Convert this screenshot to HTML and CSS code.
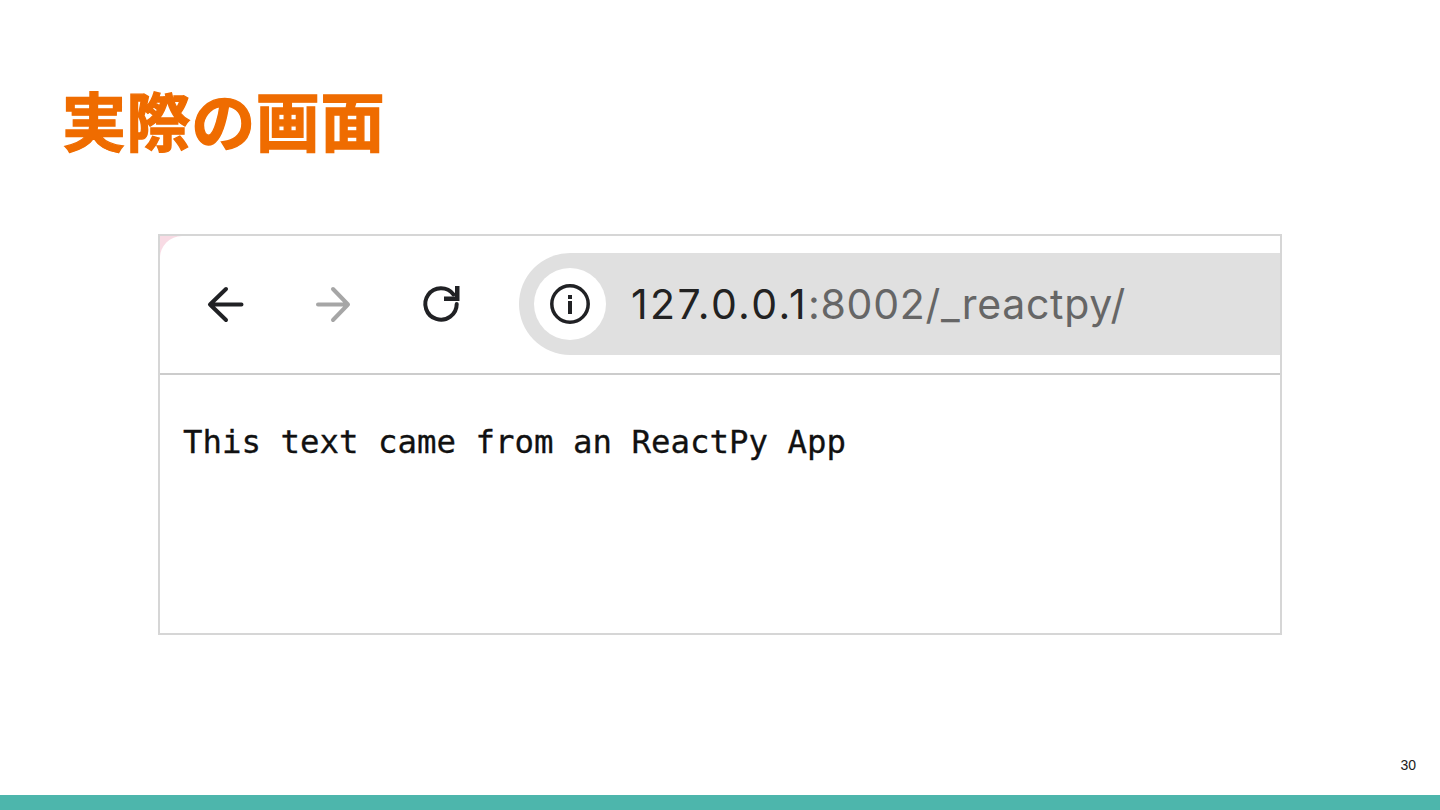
FILE: index.html
```html
<!DOCTYPE html>
<html lang="ja">
<head>
    <meta charset="UTF-8">
    <meta name="viewport" content="width=device-width, initial-scale=1.0">
    <title>実際の画面</title>
    <link rel="stylesheet" href="styles.css">
</head>
<body>
    <div class="slide">
        <h1 class="title">実際の画面</h1>

        <!-- ブラウザのスクリーンショット -->
        <div class="browser">
            <div class="toolbar">
                <svg class="nav-icon" viewBox="0 0 40 40">
                    <path class="stroke-dark" d="M36.500 20.500H5M21 5L5 20.500 21 36"/>
                </svg>
                <svg class="nav-icon" viewBox="0 0 40 40">
                    <path class="stroke-grey" d="M5 20.500h30M20 5l15 15.500L20 36"/>
                </svg>
                <svg class="nav-icon" viewBox="0 0 40 40">
                    <path class="stroke-dark" d="M32.500 10.500A15.700 15.700 0 1 0 35.700 20"/>
                    <path class="fill-dark" d="M38.500 2v15H23v-4.500h11V2z"/>
                </svg>
                <div class="address">
                    <span class="site-info">
                        <svg class="info-icon" viewBox="0 0 40 40">
                            <circle class="ring" cx="20" cy="20" r="18.200"/>
                            <rect class="fill-dark" x="18" y="17" width="4" height="13"/>
                            <rect class="fill-dark" x="18" y="11" width="4" height="4"/>
                        </svg>
                    </span>
                    <span class="url">127.0.0.1<span class="url-rest">:8002/_reactpy/</span></span>
                </div>
            </div>
            <div class="content">This text came from an ReactPy App</div>
        </div>

        <div class="page-num">30</div>
        <div class="bottom-bar"></div>
    </div>
</body>
</html>
```

FILE: styles.css
```css
body {
    margin: 0;
    background: #fff;
}
.slide {
    width: 1440px;
    height: 810px;
    display: flex;
    flex-direction: column;
    overflow: hidden;
}
.title {
    margin: 71px 0 0 62px;
    height: 94px;
    font-family: "Noto Sans CJK JP", sans-serif;
    font-size: 64px;
    font-weight: 700;
    letter-spacing: 0.600px;
    line-height: 94px;
    color: #ef6c00;
    -webkit-text-stroke: 1.300px #ef6c00;
}
.browser {
    margin: 69px 0 0 158px;
    width: 1120px;
    height: 397px;
    border: 2px solid #d6d6d6;
    background: #f8dbe4;
}
.toolbar {
    height: 136px;
    padding: 0 0 1px 45px;
    display: flex;
    align-items: center;
    gap: 68px;
    background: #fff;
    border-top-left-radius: 22px;
    border-bottom: 2px solid #ccc;
}
.nav-icon {
    width: 40px;
    height: 40px;
    flex: none;
}
.stroke-dark {
    fill: none;
    stroke: #202124;
    stroke-width: 4px;
    stroke-linecap: round;
    stroke-linejoin: round;
}
.stroke-grey {
    fill: none;
    stroke: #a6a6a6;
    stroke-width: 4px;
    stroke-linecap: round;
    stroke-linejoin: round;
}
.fill-dark {
    fill: #202124;
}
.address {
    flex: 1;
    height: 102px;
    margin-left: -10px;
    padding-left: 15px;
    display: flex;
    align-items: center;
    gap: 25px;
    background: #e0e0e0;
    border-radius: 51px 0 0 51px;
}
.site-info {
    width: 72px;
    height: 72px;
    flex: none;
    display: flex;
    align-items: center;
    justify-content: center;
    background: #fff;
    border-radius: 50%;
}
.info-icon {
    width: 40px;
    height: 40px;
}
.ring {
    fill: none;
    stroke: #202124;
    stroke-width: 3.500px;
}
.url {
    font-family: Inter, sans-serif;
    font-size: 41px;
    letter-spacing: 2.350px;
    color: #222;
    white-space: nowrap;
}
.url-rest {
    letter-spacing: 0.700px;
    color: #666;
}
.content {
    height: 258px;
    padding: 47px 0 0 23px;
    box-sizing: border-box;
    background: #fff;
    font-family: "DejaVu Sans Mono", monospace;
    font-size: 32.400px;
    line-height: 40px;
    color: #111;
    -webkit-text-stroke: 0.300px #111;
}
.page-num {
    margin: 122px 24px 0 0;
    text-align: right;
    font-family: "Liberation Sans", Arial, sans-serif;
    font-size: 14px;
    line-height: 16px;
    color: #212121;
}
.bottom-bar {
    height: 15px;
    margin-top: auto;
    background: #4db6ac;
}
```
